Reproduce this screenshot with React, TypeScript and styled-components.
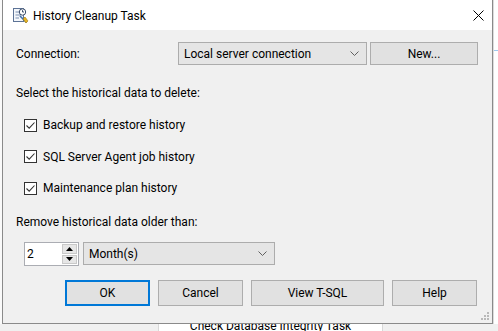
import styled, { createGlobalStyle } from "styled-components";

const GlobalStyle = createGlobalStyle`
  html, body {
    margin: 0;
    padding: 0;
    background: #ffffff;
  }
  body {
    font-family: "Segoe UI", Roboto, "Noto Sans", sans-serif;
    font-size: 12px;
    color: #000;
  }
`;

const checks = [
  "Backup and restore history",
  "SQL Server Agent job history",
  "Maintenance plan history",
];

const buttons = [
  { label: "OK", width: 85, primary: true },
  { label: "Cancel", width: 85 },
  { label: "View T-SQL", width: 133 },
  { label: "Help", width: 85 },
];

const TaskIcon = () => (
  <svg width="17" height="17" viewBox="0 0 17 17">
    <rect x="1.5" y="1.5" width="10" height="13" fill="#f4f7fb" stroke="#5d7396" />
    <line x1="3.5" y1="5" x2="7" y2="5" stroke="#7a8fb0" />
    <line x1="3.5" y1="8" x2="9" y2="8" stroke="#7a8fb0" />
    <line x1="3.5" y1="11" x2="7" y2="11" stroke="#7a8fb0" />
    <circle cx="10.5" cy="5" r="3.2" fill="#fff" stroke="#3b4d6b" />
    <path d="M10.5 3.2 V5 H12" stroke="#3b4d6b" fill="none" />
    <path d="M8 9 L14.5 15.5" stroke="#3f6fa8" strokeWidth="1.6" />
    <path d="M11 12 L13 10 L16 14 L14 16 Z" fill="#e8b423" stroke="#a07810" strokeWidth="0.6" />
  </svg>
);

const CheckMark = () => (
  <svg width="11" height="11" viewBox="0 0 11 11">
    <path d="M1.5 5.5 L4.2 8.2 L9.5 2.5" stroke="#333" strokeWidth="1.1" fill="none" />
  </svg>
);

const Chevron = () => (
  <svg width="9" height="5" viewBox="0 0 9 5">
    <path d="M0.5 0.5 L4.5 4.5 L8.5 0.5" stroke="#606060" fill="none" />
  </svg>
);

const Arrow = ({ down }: { down?: boolean }) => (
  <svg width="7" height="4" viewBox="0 0 7 4">
    <path d={down ? "M0 0 H7 L3.5 4 Z" : "M0 4 H7 L3.5 0 Z"} fill="#000" />
  </svg>
);

const App = () => {
  return (
    <>
      <GlobalStyle />
      <Desktop>
        <TopArea>
          <LeftGutter />
          <Dialog>
            <TitleBar>
              <TaskIcon />
              <Title>History Cleanup Task</Title>
              <Close>
                <svg width="11" height="11" viewBox="0 0 11 11">
                  <path d="M0.5 0.5 L10.5 10.5 M10.5 0.5 L0.5 10.5" stroke="#000" />
                </svg>
              </Close>
            </TitleBar>
            <Client>
              <ConnectionRow>
                <Label>Connection:</Label>
                <Combo width={189}>
                  <span>Local server connection</span>
                  <Chevron />
                </Combo>
                <Button width={108}>New...</Button>
              </ConnectionRow>

              <SectionLabel top={20}>Select the historical data to delete:</SectionLabel>

              <CheckList>
                {checks.map((c) => (
                  <CheckRow key={c}>
                    <CheckBox>
                      <CheckMark />
                    </CheckBox>
                    <span>{c}</span>
                  </CheckRow>
                ))}
              </CheckList>

              <SectionLabel top={18}>Remove historical data older than:</SectionLabel>

              <AgeRow>
                <Spinner>
                  <SpinValue>2</SpinValue>
                  <SpinButtons>
                    <SpinButton>
                      <Arrow />
                    </SpinButton>
                    <SpinButton>
                      <Arrow down />
                    </SpinButton>
                  </SpinButtons>
                </Spinner>
                <Combo width={192}>
                  <span>Month(s)</span>
                  <Chevron />
                </Combo>
              </AgeRow>

              <ButtonRow>
                {buttons.map((b) => (
                  <Button key={b.label} width={b.width} primary={b.primary} tall>
                    {b.label}
                  </Button>
                ))}
              </ButtonRow>

              <GripRow>
                <svg width="10" height="10" viewBox="0 0 10 10" fill="#b8b8b8">
                  <rect x="7" y="1" width="2" height="2" />
                  <rect x="4" y="4" width="2" height="2" />
                  <rect x="7" y="4" width="2" height="2" />
                  <rect x="1" y="7" width="2" height="2" />
                  <rect x="4" y="7" width="2" height="2" />
                  <rect x="7" y="7" width="2" height="2" />
                </svg>
              </GripRow>
            </Client>
          </Dialog>
          <RightGutter>
            <BlueLine />
          </RightGutter>
        </TopArea>
        <BottomStrip>
          <TaskNode>
            <span>Check Database Integrity Task</span>
          </TaskNode>
        </BottomStrip>
      </Desktop>
    </>
  );
};
export default App;

const Desktop = styled.div`
  width: 498px;
  height: 331px;
  overflow: hidden;
  display: flex;
  flex-direction: column;
  background: #f0f0f0;
`;

const TopArea = styled.div`
  display: flex;
  background: #ffffff;
`;

const LeftGutter = styled.div`
  width: 2px;
  background: #fafafa;
`;

const RightGutter = styled.div`
  flex: 1;
  background: #ffffff;
  border-left: 1px solid #dcdcdc;
  padding-top: 50px;
`;

const BlueLine = styled.div`
  height: 1px;
  background: #9fc9ee;
`;

const Dialog = styled.div`
  width: 489px;
  height: 323px;
  border: 1px solid #8a8a8a;
  border-top: none;
  display: flex;
  flex-direction: column;
  background: #f0f0f0;
`;

const TitleBar = styled.div`
  height: 30px;
  background: #ffffff;
  display: flex;
  align-items: center;
  padding-left: 9px;
  gap: 4px;
`;

const Title = styled.div`
  font-size: 12px;
  flex: 1;
  padding-top: 1px;
`;

const Close = styled.div`
  width: 28px;
  display: flex;
  justify-content: center;
  align-items: center;
`;

const Client = styled.div`
  flex: 1;
  display: flex;
  flex-direction: column;
  padding: 12px 0 0 13px;
`;

const ConnectionRow = styled.div`
  display: flex;
  align-items: center;
  height: 23px;
`;

const Label = styled.div`
  width: 162px;
`;

const Combo = styled.div<{ width: number }>`
  width: ${(p) => p.width}px;
  height: 23px;
  box-sizing: border-box;
  border: 1px solid #acacac;
  background: #e5e5e5;
  display: flex;
  align-items: center;
  justify-content: space-between;
  padding: 0 7px 0 5px;
  margin-right: 3px;
`;

const Button = styled.div<{ width: number; primary?: boolean; tall?: boolean }>`
  width: ${(p) => p.width}px;
  height: ${(p) => (p.tall ? 26 : 23)}px;
  box-sizing: border-box;
  border: ${(p) => (p.primary ? "2px solid #0078d7" : "1px solid #adadad")};
  background: #e1e1e1;
  display: flex;
  align-items: center;
  justify-content: center;
`;

const SectionLabel = styled.div<{ top: number }>`
  margin-top: ${(p) => p.top}px;
  line-height: 16px;
`;

const CheckList = styled.div`
  display: flex;
  flex-direction: column;
  gap: 15.5px;
  margin-top: 16px;
  padding-left: 8px;
`;

const CheckRow = styled.div`
  display: flex;
  align-items: center;
  gap: 6px;
  height: 16px;
`;

const CheckBox = styled.div`
  width: 13px;
  height: 13px;
  box-sizing: border-box;
  border: 1px solid #333;
  background: #ffffff;
  display: flex;
  align-items: center;
  justify-content: center;
`;

const AgeRow = styled.div`
  display: flex;
  gap: 4px;
  margin-top: 12px;
  padding-left: 8px;
`;

const Spinner = styled.div`
  width: 55px;
  height: 24px;
  box-sizing: border-box;
  border: 1px solid #abadb3;
  background: #ffffff;
  display: flex;
  align-items: center;
  padding: 1px 1px 1px 2px;
`;

const SpinValue = styled.div`
  flex: 1;
`;

const SpinButtons = styled.div`
  width: 15px;
  height: 100%;
  display: flex;
  flex-direction: column;
  gap: 1px;
`;

const SpinButton = styled.div`
  flex: 1;
  background: #e6e6e6;
  border: 1px solid #c9c9c9;
  display: flex;
  align-items: center;
  justify-content: center;
`;

const ButtonRow = styled.div`
  display: flex;
  gap: 8px;
  margin-top: 14px;
  padding-left: 49px;
`;

const GripRow = styled.div`
  flex: 1;
  display: flex;
  justify-content: flex-end;
  align-items: flex-end;
  padding: 0 2px 2px 0;
`;

const BottomStrip = styled.div`
  flex: 1;
  background: #f0f0f0;
  padding-left: 158px;
`;

const TaskNode = styled.div`
  width: 225px;
  height: 100%;
  box-sizing: border-box;
  background: #ffffff;
  border-left: 1px solid #d8d8d8;
  border-right: 1px solid #d8d8d8;
  overflow: hidden;
  display: flex;
  justify-content: center;

  span {
    margin-top: -6px;
    line-height: 16px;
    font-size: 12px;
  }
`;
